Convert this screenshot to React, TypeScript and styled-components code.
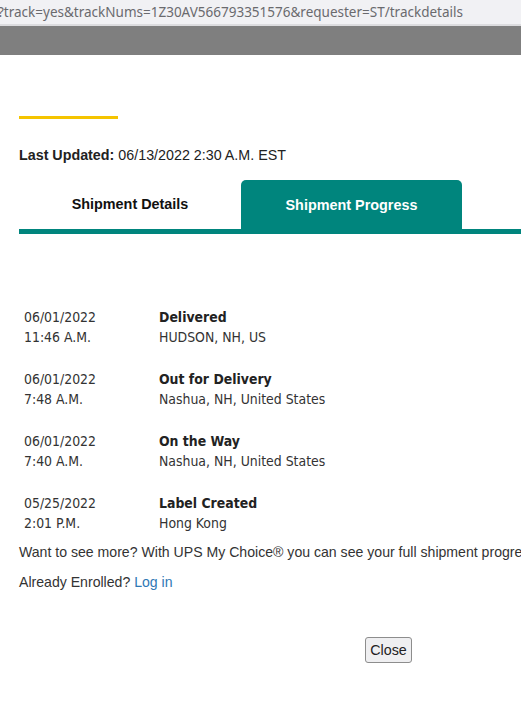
import React from 'react'
import styled, { createGlobalStyle } from 'styled-components'

const GlobalStyle = createGlobalStyle`
  html, body {
    margin: 0;
    padding: 0;
    background: #fff;
    overflow: hidden;
  }
  body {
    font-family: "Liberation Sans", Arial, sans-serif;
    color: #333;
  }
`

const Page = styled.div`
  width: 521px;
  height: 712px;
  display: flex;
  flex-direction: column;
  overflow: hidden;
`

const AddressBar = styled.div`
  height: 24px;
  background: #f1f1f4;
  border-bottom: 2px solid #dcdcdf;
  display: flex;
  align-items: center;
  margin-left: -2px;
  font-family: "Noto Sans", "Open Sans", sans-serif;
  font-size: 13.5px;
  color: #6a6a6e;
  white-space: nowrap;
  overflow: hidden;
`

const Overlay = styled.div`
  height: 29px;
  background: #7f7f7f;
`

const Modal = styled.div`
  flex: 1;
  padding: 61px 0 0 19px;
  display: flex;
  flex-direction: column;
`

const Accent = styled.div`
  width: 99px;
  height: 3px;
  background: #f5c400;
`

const Updated = styled.p`
  margin: 28px 0 0;
  font-size: 14.3px;
  color: #222;
  line-height: 16px;
  b {
    font-weight: bold;
  }
`

const TabBar = styled.div`
  display: flex;
  margin-top: 17px;
  border-bottom: 5px solid #00857d;
`

const Tab = styled.div<{ $active?: boolean }>`
  width: ${({ $active }) => ($active ? '221px' : '222px')};
  height: 49px;
  display: flex;
  align-items: center;
  justify-content: center;
  font-size: 14.4px;
  font-weight: bold;
  padding-bottom: ${({ $active }) => ($active ? '0' : '2px')};
  box-sizing: border-box;
  border-radius: 5px 5px 0 0;
  background: ${({ $active }) => ($active ? '#00857d' : 'transparent')};
  color: ${({ $active }) => ($active ? '#fff' : '#111')};
`

const Timeline = styled.div`
  margin-top: 73px;
  padding-left: 5px;
  display: flex;
  flex-direction: column;
  gap: 22px;
  font-family: "DejaVu Sans Condensed", "DejaVu Sans", Tahoma, sans-serif;
  font-size: 13.9px;
  line-height: 20px;
  color: #333;
`

const Row = styled.div`
  display: grid;
  grid-template-columns: 135px 1fr;
`

const Cell = styled.div`
  display: flex;
  flex-direction: column;
  white-space: nowrap;
`

const Status = styled.span`
  font-weight: bold;
  color: #222;
`

const Note = styled.p`
  margin: 11px 0 0;
  font-size: 14.1px;
  line-height: 16px;
  color: #333;
  white-space: nowrap;
  & + & {
    margin-top: 14px;
  }
`

const Link = styled.a`
  color: #2f78b5;
  text-decoration: none;
`

const Footer = styled.div`
  margin-top: 47px;
  padding-left: 346px;
`

const CloseButton = styled.button`
  width: 47px;
  height: 26px;
  padding: 0;
  font-family: "Liberation Sans", Arial, sans-serif;
  font-size: 14.3px;
  color: #222;
  background: #efeff1;
  border: 1px solid #8d8d8d;
  border-radius: 3px;
`

const events = [
  { date: '06/01/2022', time: '11:46 A.M.', status: 'Delivered', place: 'HUDSON, NH, US' },
  { date: '06/01/2022', time: '7:48 A.M.', status: 'Out for Delivery', place: 'Nashua, NH, United States' },
  { date: '06/01/2022', time: '7:40 A.M.', status: 'On the Way', place: 'Nashua, NH, United States' },
  { date: '05/25/2022', time: '2:01 P.M.', status: 'Label Created', place: 'Hong Kong' },
]

export default function App() {
  return (
    <Page>
      <GlobalStyle />
      <AddressBar>?track=yes&amp;trackNums=1Z30AV566793351576&amp;requester=ST/trackdetails</AddressBar>
      <Overlay />
      <Modal>
        <Accent />
        <Updated>
          <b>Last Updated:</b> 06/13/2022 2:30 A.M. EST
        </Updated>
        <TabBar>
          <Tab>Shipment Details</Tab>
          <Tab $active>Shipment Progress</Tab>
        </TabBar>
        <Timeline>
          {events.map((e, i) => (
            <Row key={i}>
              <Cell>
                <span>{e.date}</span>
                <span>{e.time}</span>
              </Cell>
              <Cell>
                <Status>{e.status}</Status>
                <span>{e.place}</span>
              </Cell>
            </Row>
          ))}
        </Timeline>
        <Note>Want to see more? With UPS My Choice® you can see your full shipment progress and more.</Note>
        <Note>
          Already Enrolled? <Link href="#">Log in</Link>
        </Note>
        <Footer>
          <CloseButton>Close</CloseButton>
        </Footer>
      </Modal>
    </Page>
  )
}
